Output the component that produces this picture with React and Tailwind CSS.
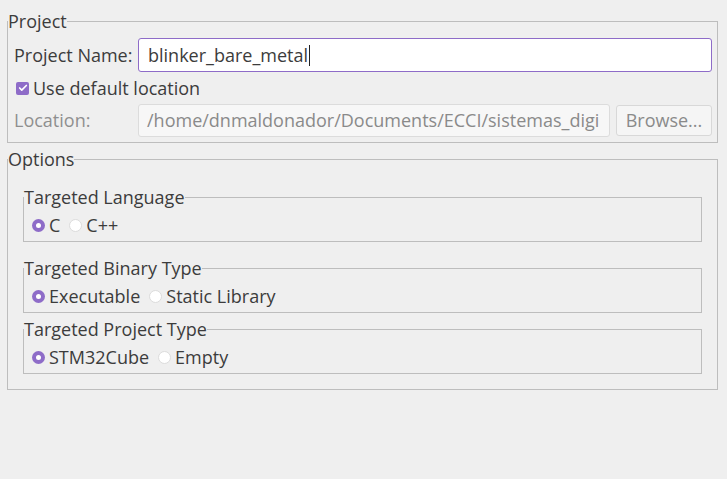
import { Check } from 'lucide-react';

const font = { fontFamily: '"Open Sans", "Noto Sans", sans-serif' };

const Radio = ({ checked, label }) => (
  <span className="flex items-center mr-[9px]">
    {checked ? (
      <span className="h-[13px] w-[13px] rounded-full bg-[#8e6cc8] flex items-center justify-center">
        <span className="h-[5px] w-[5px] rounded-full bg-white" />
      </span>
    ) : (
      <span className="h-[13px] w-[13px] rounded-full bg-white border border-[#dcdcdc]" />
    )}
    <span className="ml-[4px]">{label}</span>
  </span>
);

const SubGroup = ({ title, options, className }) => (
  <fieldset className={`border border-[#bdbdbd] ${className}`}>
    <legend className="h-5 leading-5">{title}</legend>
    <div className="pt-2 pb-[6px] pl-2 h-[34px] flex items-center leading-5">
      {options.map((o) => (
        <Radio key={o.label} checked={o.checked} label={o.label} />
      ))}
    </div>
  </fieldset>
);

export default function App() {
  return (
    <div className="w-[727px] h-[479px] bg-[#efefef] text-[#3c3c3c] text-[18px] pt-[11px] pl-[7px] pr-[9px] overflow-hidden" style={font}>
      <fieldset className="border border-[#bdbdbd] pb-[5px] min-w-0">
        <legend className="h-5 leading-5">Project</legend>
        <div className="pt-[7px] pl-[6px] pr-[5px]">
          <div className="flex items-center">
            <span className="w-[124px] shrink-0">Project Name:</span>
            <div className="flex-1 min-w-0 h-[34px] bg-white border border-[#8e6cc8] rounded-[3px] flex items-center pl-[9px]">
              <span className="whitespace-nowrap">blinker_bare_metal</span>
              <span className="w-px h-[21px] bg-[#222] ml-[1px]" />
            </div>
          </div>
          <div className="flex items-center h-[32px] pl-[2px]">
            <span className="h-[13px] w-[13px] rounded-[2px] bg-[#8e6cc8] flex items-center justify-center">
              <Check className="h-[10px] w-[10px] text-white" strokeWidth={4} />
            </span>
            <span className="ml-[4px]">Use default location</span>
          </div>
          <div className="flex items-center">
            <span className="w-[124px] shrink-0 text-[#8f8f8f]">Location:</span>
            <div className="flex-1 min-w-0 h-[33px] bg-[#f7f7f7] border border-[#dcdcdc] rounded-[3px] flex items-center pl-[8px] text-[#8a8a8a]">
              <span className="whitespace-nowrap">/home/dnmaldonador/Documents/ECCI/sistemas_digi</span>
            </div>
            <div className="ml-[6px] shrink-0 w-[96px] h-[31px] bg-[#f5f5f5] border border-[#d8d8d8] rounded-[3px] flex items-center justify-center text-[#8a8a8a]">
              Browse...
            </div>
          </div>
        </div>
      </fieldset>

      <fieldset className="border border-[#bdbdbd] mt-[6px] min-w-0">
        <legend className="h-5 leading-5">Options</legend>
        <div className="pl-[15px] pr-[15px] pb-[15px]">
          <SubGroup
            className="mt-[18px]"
            title="Targeted Language"
            options={[{ label: 'C', checked: true }, { label: 'C++', checked: false }]}
          />
          <SubGroup
            className="mt-[16px]"
            title="Targeted Binary Type"
            options={[{ label: 'Executable', checked: true }, { label: 'Static Library', checked: false }]}
          />
          <SubGroup
            className="mt-[6px]"
            title="Targeted Project Type"
            options={[{ label: 'STM32Cube', checked: true }, { label: 'Empty', checked: false }]}
          />
        </div>
      </fieldset>
    </div>
  );
}
